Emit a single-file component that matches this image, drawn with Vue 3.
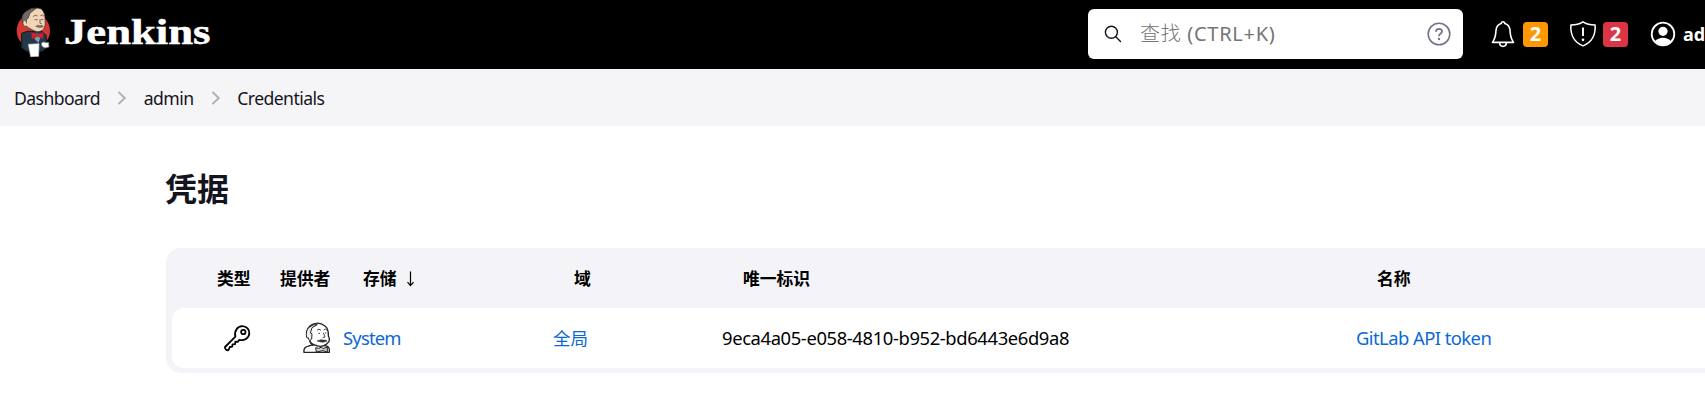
<script setup>
const crumbs = [
  { label: 'Dashboard', cls: 'dash' },
  { label: 'admin', cls: 'adm' },
  { label: 'Credentials', cls: 'cred' },
]
</script>

<template>
  <div class="page">
    <header class="header">
      <a class="brand">
        <svg class="butler" width="50" height="60" viewBox="0 0 150 180">
          <ellipse cx="70" cy="80" rx="50" ry="52" fill="#d33833" />
          <path d="M35 88 L52 82 L96 82 L108 94 L112 128 L98 142 L50 142 L35 132 Z" fill="#22394a" stroke="#0e1a22" stroke-width="3" />
          <path d="M66 88 L94 90 L86 116 L76 108 Z" fill="#7ba0b5" />
          <path d="M40 58 Q33 35 50 22 Q70 6 94 15 Q106 26 105 48 Q108 68 98 78 Q84 88 68 78 Q55 72 49 66 Z" fill="#f0d6b7" stroke="#3a2d24" stroke-width="2" />
          <path d="M38 56 Q30 32 50 21 Q64 10 79 13 L60 27 L55 42 L50 46 L48 60 Z" fill="#6d6b6d" stroke="#302b2b" stroke-width="2" />
          <path d="M45 48 Q36 49 39 60 Q44 72 51 65" fill="#f0d6b7" stroke="#3a2d24" stroke-width="2" />
          <path d="M69 38 Q75 30 83 36 M91 35 Q98 30 102 37 M73 47 L83 47 M92 47 L100 47 M90 46 L90 58 L95 59" fill="none" stroke="#6a5140" stroke-width="2.5" />
          <path d="M77 67 Q84 61 89 65 Q98 62 100 68 Q89 74 77 67 Z" fill="#8a7467" stroke="#5a473d" stroke-width="1.5" />
          <path d="M64 84 L82 92 L101 84 L98 105 L83 96 L66 106 Z" fill="#d91e35" stroke="#8e1825" stroke-width="2" />
          <path d="M82 121 L101 120 L101 137 L82 138 Z" fill="#22394a" />
          <path d="M55 121 L87 119 L86 157 L62 158 Z" fill="#fff" stroke="#c7ccd0" stroke-width="2" />
          <path d="M94 118 Q100 111 107 116 L116 115 L117 129 L105 132 L96 127 Z" fill="#fff" stroke="#777" stroke-width="2" />
        </svg>
        <span class="wordmark">Jenkins</span>
      </a>
      <div class="search">
        <svg class="glass" width="18" height="18" viewBox="0 0 18 18" fill="none" stroke="#14141f" stroke-width="1.4" stroke-linecap="round">
          <circle cx="7.4" cy="7.3" r="6" /><path d="M11.8 11.8 L16.5 16.4" />
        </svg>
        <span class="placeholder"><span class="light">查找</span> (CTRL+K)</span>
        <svg class="help" width="24" height="24" viewBox="0 0 24 24" fill="none" stroke="#73738c" stroke-width="1.6">
          <circle cx="12" cy="12" r="10.8" />
          <path d="M9 9.8 C9 5.8 15.2 6 15 9.4 C14.9 11.6 12 11.3 12 14.2" stroke-width="1.8" />
          <circle cx="12" cy="17" r="1.2" fill="#73738c" stroke="none" />
        </svg>
      </div>
      <div class="actions">
        <svg width="24" height="28" viewBox="0 0 24 28" fill="none" stroke="#fff" stroke-width="1.6" stroke-linejoin="round">
          <path d="M10.3 3.6 C10.3 1.2 13.7 1.2 13.7 3.6 C17.6 4.6 18.9 7.5 19.1 11.2 C19.3 16 20.5 19.5 22.6 22.4 H1.4 C3.5 19.5 4.7 16 4.9 11.2 C5.1 7.5 6.4 4.6 10.3 3.6 Z" />
          <path d="M8.6 22.8 C8.8 27.6 15.2 27.6 15.4 22.8" />
        </svg>
        <span class="badge warn">2</span>
        <svg class="shield" width="28" height="28" viewBox="0 0 28 28" fill="none" stroke="#fff" stroke-width="1.5" stroke-linejoin="round">
          <path d="M14 1.8 C17.5 4.1 21.7 4.9 26.1 4.9 C26.8 15 22.8 22.3 14 25.9 C5.2 22.3 1.2 15 1.9 4.9 C6.3 4.9 10.5 4.1 14 1.8 Z" />
          <path d="M14 7.5 V16" stroke-width="1.9" /><circle cx="14" cy="19.8" r="1.35" fill="#fff" stroke="none" />
        </svg>
        <span class="badge danger">2</span>
        <svg class="person" width="26" height="26" viewBox="0 0 26 26">
          <circle cx="13" cy="13" r="11.3" fill="none" stroke="#fff" stroke-width="1.8" />
          <circle cx="13" cy="10.3" r="4.6" fill="#fff" />
          <path d="M4.8 20.3 C8.8 15.4 17.2 15.4 21.2 20.3 C16.7 25.3 9.3 25.3 4.8 20.3 Z" fill="#fff" />
        </svg>
        <span class="user">admin</span>
      </div>
    </header>

    <nav class="crumbs">
      <template v-for="(c, i) in crumbs" :key="c.label">
        <svg v-if="i" class="chev" width="10" height="14" viewBox="0 0 10 14" fill="none" stroke="#aeaebe" stroke-width="2">
          <path d="M1.4 0.9 L7.7 7 L1.4 13.1" />
        </svg>
        <a :class="['crumb', c.cls]">{{ c.label }}</a>
      </template>
    </nav>

    <main class="main">
      <h1>凭据</h1>
      <div class="table">
        <div class="row head">
          <span class="first">类型</span>
          <span class="second">提供者</span>
          <span class="indent sort">存储
            <svg width="9" height="16" viewBox="0 0 9 16" fill="none" stroke="#000" stroke-width="1.2">
              <path d="M4.5 0.5 V14 M1.5 11.2 L4.5 14.6 L7.5 11.2" />
            </svg>
          </span>
          <span class="indent uid">域</span>
          <span class="indent uid">唯一标识</span>
          <span class="indent uid">名称</span>
        </div>
        <div class="row body">
          <span class="keycell">
            <svg width="28" height="28" viewBox="0 0 28 28" fill="none" stroke="#000" stroke-width="1.8" stroke-linejoin="round">
              <path d="M12.4 12.6 C10.9 7.5 14.3 2.1 19.2 2.1 C23.8 2.1 26.6 5.6 26.3 9.5 C26 14.2 21 17.1 16.3 15.9 L14.7 17.8 L12.3 17.7 L12.1 20.2 L9.5 20.3 L9.2 22.6 L6.8 23 L5.7 25.7 C4.4 27.1 1.6 25.1 2 23 Z" />
              <circle cx="20.3" cy="8" r="2.2" />
            </svg>
          </span>
          <span class="facecell">
            <svg width="28" height="32" viewBox="0 0 84 96" fill="#fff" stroke="#222" stroke-width="4" stroke-linejoin="round">
              <path d="M3 91 Q1 76 14 73 L30 68 L62 71 Q78 71 79 82 L79 91 Z" />
              <path d="M16 48 Q5 21 27 8 Q48 -3 66 12 Q77 20 76 42 Q84 56 72 65 Q58 78 39 70 Q23 66 20 55 Z" />
              <path d="M18 49 L11 47 Q7 28 17 17 Q30 5 43 8 L27 17 L22 33 L27 35 L26 51 L20 56" fill="#eee" stroke-width="3" />
              <path d="M20 56 Q22 70 31 71 M42 25 Q48 18 54 25 M62 24 Q67 18 73 25 M46 34 H51 M66 33 H70 M61 32 L66 45 L59 47" fill="none" stroke-width="2.5" />
              <path d="M42 57 L54 53 L70 55 L72 58 L58 61 Z" fill="#333" stroke-width="1.5" />
              <path d="M38 77 L47 79 L56 75 L60 80 L73 75 L73 90 L60 86 L40 90 Z" fill="#ccc" stroke-width="3" />
            </svg>
          </span>
          <a class="link sys">System</a>
          <a class="link zh">全局</a>
          <span class="id">9eca4a05-e058-4810-b952-bd6443e6d9a8</span>
          <a class="link git">GitLab API token</a>
        </div>
      </div>
    </main>
  </div>
</template>

<style>
html, body { margin: 0; overflow: hidden; background: #fff; }
</style>

<style scoped>
.page {
  width: 1705px; height: 403px; overflow: hidden; background: #fff; color: #14141f;
  font-family: "Noto Sans", "Noto Sans CJK SC", sans-serif;
}
.header { box-sizing: border-box; height: 69px; padding-bottom: 1px; background: #000; display: flex; align-items: center; color: #fff; overflow: hidden; }
.brand { display: flex; align-items: center; width: 1088px; flex: none; height: 69px; }
.butler { margin-left: 10px; }
.wordmark {
  font: bold 36px/40px "Liberation Serif", serif; margin: -4px 0 0 4px;
  transform: scaleX(1.24); transform-origin: 0 50%; -webkit-text-stroke: 0.5px #fff;
}
.search {
  box-sizing: border-box; width: 375px; height: 50px; border-radius: 6px; background: #fff;
  display: flex; align-items: center; padding: 0 12px 0 16px; flex: none;
}
.glass { margin-right: 18px; }
.placeholder { color: #757575; font-size: 20px; line-height: 28px; flex: 1; white-space: nowrap; letter-spacing: 0.7px; }
.light { font-weight: 300; }
.actions { display: flex; align-items: center; padding-left: 28px; flex: none; }
.badge {
  width: 25px; height: 25px; border-radius: 4px; margin-left: 8px; font-weight: 700; font-size: 20px;
  line-height: 24px; text-align: center;
}
.warn { background: #ff9800; }
.danger { background: #dc3545; margin-left: 6px; }
.shield { margin-left: 21px; }
.person { margin-left: 22px; }
.user { font-weight: 700; font-size: 18px; margin-left: 7px; line-height: 24px; }
.crumbs { height: 57px; background: #f5f5f8; display: flex; align-items: center; padding-left: 14px; }
.crumb { font-size: 17.6px; line-height: 24px; white-space: nowrap; letter-spacing: -0.57px; }
.chev { margin: 0 16.5px 0 17.3px; }
.main { padding-left: 166px; }
h1 { margin: 0 0 0 -1px; padding-top: 39px; height: 83px; font-size: 32px; line-height: 48px; font-weight: 700; }
.table {
  box-sizing: border-box; width: 1554px; height: 125px; border-radius: 15px; background: #f3f3f8; padding: 0 6px 5px;
}
.row { height: 60px; display: grid; grid-template-columns: 98px 73px 210px 169px 634px 1fr; align-items: center; }
.head { color: #000; font-size: 16.8px; font-weight: 700; line-height: 24px; }
.head > span { padding-top: 2px; }
.first { padding-left: 45px; }
.second { padding-left: 10px; }
.indent { padding-left: 20px; }
.uid { padding-left: 21px; }
.sort { display: flex; align-items: center; gap: 9px; }
.body { background: #fff; border-radius: 12px; color: #000; font-size: 18.4px; line-height: 26px; }
.keycell { padding-left: 51px; }
.facecell { padding-left: 33px; }
.keycell, .facecell { display: flex; }
.link { color: #0b68d4; white-space: nowrap; }
.sys { letter-spacing: -0.8px; }
.git { letter-spacing: -0.55px; }
.zh { font-size: 17.5px; }
.id { letter-spacing: -0.38px; }
</style>
